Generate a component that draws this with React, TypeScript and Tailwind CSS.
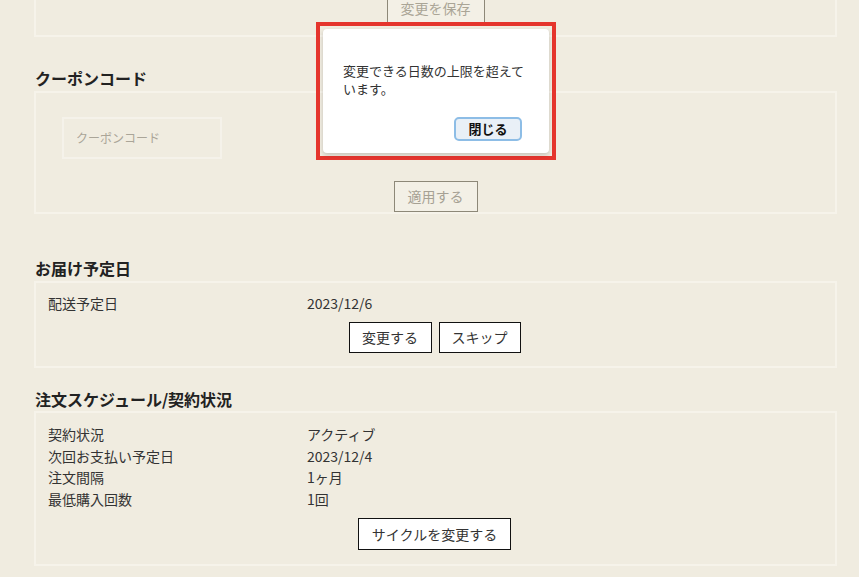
import React from 'react';

const jp = { fontFamily: '"Noto Sans CJK JP", "Noto Sans", sans-serif' };

const Heading = ({ children, className }: { children: React.ReactNode; className: string }) => (
  <h2 className={`text-[16px] font-bold leading-[22px] text-[#222] pl-px ${className}`}>{children}</h2>
);

const Row = ({ label, value }: { label: string; value: string }) => (
  <div className="flex h-[21.7px] items-center pl-[12px] text-[14px] text-[#333]">
    <span className="w-[259px]">{label}</span>
    <span>{value}</span>
  </div>
);

export default function App() {
  return (
    <div style={jp} className="relative min-h-[577px] w-[859px] overflow-hidden bg-[#f0ece0]">
      <div className="w-[803px] ml-[34px]">
        {/* 変更を保存 */}
        <div className="-mt-[10px] h-[47px] border-2 border-[#f6f3ea] flex justify-center">
          <button className="h-[32px] mt-0 w-[98px] border border-[#8d8878] bg-[#f3f0e6] text-[14px] text-[#aaa596]">
            変更を保存
          </button>
        </div>

        {/* クーポンコード */}
        <Heading className="mt-[30px] mb-[2px]">クーポンコード</Heading>
        <div className="h-[123px] border-2 border-[#f6f3ea] flex flex-col">
          <div className="ml-[26px] mt-[24px] h-[45px] w-[160px] border-2 border-[#f5f2ea] flex items-center pl-[12px] text-[12px] text-[#aaa598]">
            クーポンコード
          </div>
          <div className="flex justify-center mt-[22px]">
            <button className="h-[31px] w-[84px] border border-[#8d8878] bg-[#f3f0e6] text-[14px] text-[#a6a194]">
              適用する
            </button>
          </div>
        </div>

        {/* お届け予定日 */}
        <Heading className="mt-[43px] mb-[2px]">お届け予定日</Heading>
        <div className="border-2 border-[#f6f3ea] pt-[10px] pb-[13px]">
          <Row label="配送予定日" value="2023/12/6" />
          <div className="flex justify-center gap-[7px] mt-[7px] pr-[2px]">
            <button className="h-[31px] w-[83px] border border-[#111] bg-white text-[14px] text-[#333]">変更する</button>
            <button className="h-[31px] w-[82px] border border-[#111] bg-white text-[14px] text-[#333]">スキップ</button>
          </div>
        </div>

        {/* 注文スケジュール/契約状況 */}
        <Heading className="mt-[20px] mb-[1px]">注文スケジュール/契約状況</Heading>
        <div className="border-2 border-[#f6f3ea] pt-[11px] pb-[14px]">
          <Row label="契約状況" value="アクティブ" />
          <Row label="次回お支払い予定日" value="2023/12/4" />
          <Row label="注文間隔" value="1ヶ月" />
          <Row label="最低購入回数" value="1回" />
          <div className="flex justify-center mt-[8px] pr-[2px]">
            <button className="h-[32px] w-[153px] border border-[#111] bg-white text-[14px] text-[#333]">
              サイクルを変更する
            </button>
          </div>
        </div>
      </div>

      {/* dialog */}
      <div className="absolute left-[316px] top-[22px] w-[240px] h-[138px] border-4 border-[#e5352d] p-[3px]">
        <div className="h-full rounded-[4px] bg-white shadow-[0_2px_4px_rgba(0,0,0,0.18)] flex flex-col pl-[20px] pr-[27px]">
          <p className="mt-[33px] -mr-[14px] text-[13px] leading-[18px] text-[#333]">
            変更できる日数の上限を超えています。
          </p>
          <div className="flex justify-end mt-[19px]">
            <button className="h-[24px] w-[68px] rounded-[5px] border-2 border-[#8dbde6] bg-[#e9f0f7] text-[13px] font-bold text-[#111]">
              閉じる
            </button>
          </div>
        </div>
      </div>
    </div>
  );
}
